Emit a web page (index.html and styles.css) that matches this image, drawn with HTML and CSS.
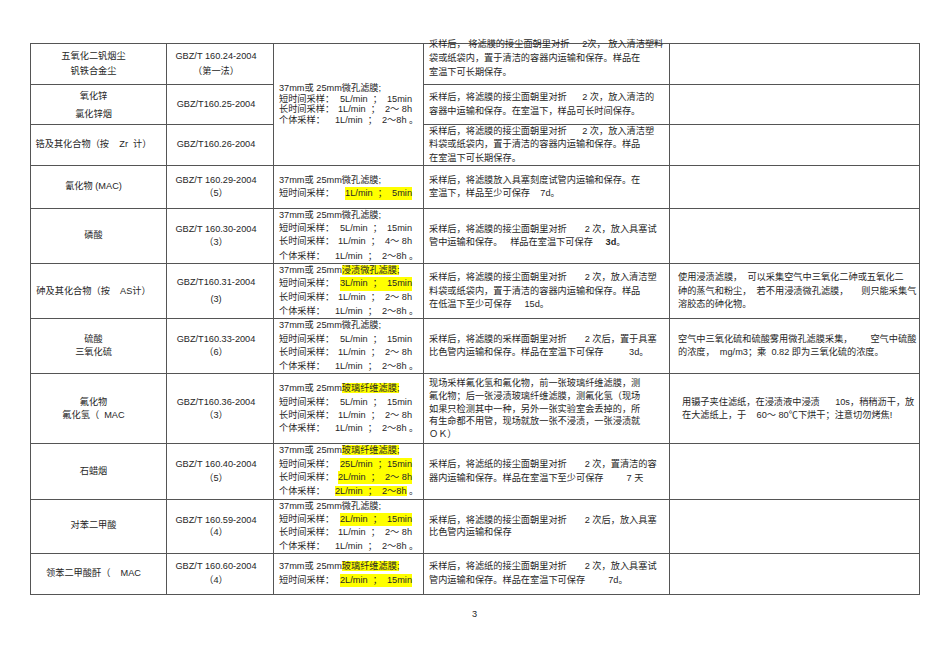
FILE: index.html
```html
<!DOCTYPE html>
<html lang="zh-CN">
<head>
<meta charset="utf-8">
<title>采样方法</title>
<link rel="stylesheet" href="styles.css">
</head>
<body>
<div class="page">
<table class="grid">
<colgroup><col class="c1"><col class="c2"><col class="c3"><col class="c4"><col class="c5"></colgroup>
<tr class="h41">
<td class="name"><div class="ln l15">五氧化二钒烟尘</div><div class="ln l15">钒铁合金尘</div></td>
<td class="std"><div class="ln l15">GBZ/T 160.24-2004</div><div class="ln l15">（第一法）</div></td>
<td class="samp" rowspan="3">
<div class="ln tight">37mm或 25mm微孔滤膜;</div>
<div class="ln tight kv"><span>短时间采样：</span><span>5L/min  ；  15min</span></div>
<div class="ln tight kv"><span>长时间采样：</span><span>1L/min  ；  2～ 8h</span></div>
<div class="ln tight"><span class="k3">个体采样：</span><span>1L/min  ；  2～8h 。</span></div>
</td>
<td class="note top"><div class="shift"><div class="ln l14">采样后， 将滤膜的接尘面朝里对折     2次， 放入清洁塑料</div><div class="ln l14">袋或纸袋内，置于清洁的容器内运输和保存。样品在</div><div class="ln l14">室温下可长期保存。</div></div></td>
<td class="rem"></td>
</tr>
<tr class="h40">
<td class="name"><div class="ln l18">氧化锌</div><div class="ln l18">氯化锌烟</div></td>
<td class="std"><div class="ln">GBZ/T160.25-2004</div></td>
<td class="note"><div class="ln">采样后，将滤膜的接尘面朝里对折      2 次，放入清洁的</div><div class="ln">容器中运输和保存。在室温下，样品可长时间保存。</div></td>
<td class="rem"></td>
</tr>
<tr class="h40">
<td class="name"><div class="ln">锆及其化合物（按    Zr  计）</div></td>
<td class="std"><div class="ln">GBZ/T160.26-2004</div></td>
<td class="note"><div class="ln">采样后，将滤膜的接尘面朝里对折      2 次，放入清洁塑</div><div class="ln">料袋或纸袋内，置于清洁的容器内运输和保存。样品</div><div class="ln">在室温下可长期保存。</div></td>
<td class="rem"></td>
</tr>
<tr class="h43">
<td class="name"><div class="ln">氰化物 (MAC)</div></td>
<td class="std"><div class="ln">GBZ/T 160.29-2004</div><div class="ln">（5）</div></td>
<td class="samp">
<div class="ln">37mm或 25mm微孔滤膜;</div>
<div class="ln kv"><span>短时间采样：</span><span class="hl">1L/min  ；  5min</span></div>
</td>
<td class="note"><div class="ln">采样后，将滤膜放入具塞刻度试管内运输和保存。在</div><div class="ln">室温下，样品至少可保存    7d。</div></td>
<td class="rem"></td>
</tr>
<tr class="h55">
<td class="name"><div class="ln">磷酸</div></td>
<td class="std"><div class="ln">GBZ/T 160.30-2004</div><div class="ln">（3）</div></td>
<td class="samp">
<div class="ln">37mm或 25mm微孔滤膜;</div>
<div class="ln kv"><span>短时间采样：</span><span>5L/min  ；  15min</span></div>
<div class="ln kv"><span>长时间采样：</span><span>1L/min  ；  4～ 8h</span></div>
<div class="ln last"><span class="k3">个体采样：</span><span>1L/min  ；  2～8h 。</span></div>
</td>
<td class="note"><div class="ln">采样后，将滤膜的接尘面朝里对折       2 次，放入具塞试</div><div class="ln">管中运输和保存。   样品在室温下可保存     <b>3d</b>。</div></td>
<td class="rem"></td>
</tr>
<tr class="h55">
<td class="name"><div class="ln">砷及其化合物（按    AS计）</div></td>
<td class="std"><div class="ln l17">GBZ/T160.31-2004</div><div class="ln l17">(3)</div></td>
<td class="samp">
<div class="ln">37mm或 25mm<span class="hl">浸渍微孔滤膜;</span></div>
<div class="ln kv"><span>短时间采样：</span><span class="hl">3L/min  ；  15min</span></div>
<div class="ln kv"><span>长时间采样：</span><span>1L/min  ；  2～ 8h</span></div>
<div class="ln last"><span class="k3">个体采样：</span><span>1L/min  ；  2～8h 。</span></div>
</td>
<td class="note"><div class="ln">采样后，将滤膜的接尘面朝里对折       2 次，放入清洁塑</div><div class="ln">料袋或纸袋内，置于清洁的容器内运输和保存。样品</div><div class="ln">在低温下至少可保存     15d。</div></td>
<td class="rem"><div class="ln">使用浸渍滤膜，  可以采集空气中三氧化二砷或五氧化二</div><div class="ln">砷的蒸气和粉尘，  若不用浸渍微孔滤膜，     则只能采集气</div><div class="ln">溶胶态的砷化物。</div></td>
</tr>
<tr class="h55">
<td class="name"><div class="ln">硫酸</div><div class="ln">三氧化硫</div></td>
<td class="std"><div class="ln">GBZ/T160.33-2004</div><div class="ln">（6）</div></td>
<td class="samp">
<div class="ln">37mm或 25mm微孔滤膜;</div>
<div class="ln kv"><span>短时间采样：</span><span>5L/min  ；  15min</span></div>
<div class="ln kv"><span>长时间采样：</span><span>1L/min  ；  2～ 8h</span></div>
<div class="ln last"><span class="k3">个体采样：</span><span>1L/min  ；  2～8h 。</span></div>
</td>
<td class="note"><div class="ln">采样后，将滤膜的采样面朝里对折       2 次后，置于具塞</div><div class="ln">比色管内运输和保存。样品在室温下可保存          3d。</div></td>
<td class="rem"><div class="ln">空气中三氧化硫和硫酸雾用微孔滤膜采集，       空气中硫酸</div><div class="ln">的浓度，  mg/m3；乘  0.82 即为三氧化硫的浓度。</div></td>
</tr>
<tr class="h70">
<td class="name"><div class="ln">氟化物</div><div class="ln">氟化氢（  MAC</div></td>
<td class="std"><div class="ln">GBZ/T160.36-2004</div><div class="ln">（3）</div></td>
<td class="samp">
<div class="ln">37mm或 25mm<span class="hl">玻璃纤维滤膜;</span></div>
<div class="ln kv"><span>短时间采样：</span><span>5L/min  ；  15min</span></div>
<div class="ln kv"><span>长时间采样：</span><span>1L/min  ；  2～ 8h</span></div>
<div class="ln"><span class="k3">个体采样：</span><span>1L/min  ；  2～8h 。</span></div>
</td>
<td class="note"><div class="ln l127">现场采样氟化氢和氟化物，前一张玻璃纤维滤膜，测</div><div class="ln l127">氟化物；后一张浸渍玻璃纤维滤膜，测氟化氢（现场</div><div class="ln l127">如果只检测其中一种，另外一张实验室会丢掉的，所</div><div class="ln l127">有生命都不用管，现场就放一张不浸渍，一张浸渍就</div><div class="ln l127">ＯＫ）</div></td>
<td class="rem"><div class="ln ind">用镊子夹住滤纸，在浸渍液中浸渍      10s，稍稍沥干，放</div><div class="ln ind">在大滤纸上，于    60～ 80℃下烘干；注意切勿烤焦!</div></td>
</tr>
<tr class="h55">
<td class="name"><div class="ln">石蜡烟</div></td>
<td class="std"><div class="ln">GBZ/T 160.40-2004</div><div class="ln">（5）</div></td>
<td class="samp">
<div class="ln">37mm或 25mm<span class="hl">玻璃纤维滤膜;</span></div>
<div class="ln kv"><span>短时间采样：</span><span class="hl">25L/min  ；15min</span></div>
<div class="ln kv"><span>长时间采样：</span><span class="hl">2L/min  ；  2～ 8h</span></div>
<div class="ln last"><span class="k3">个体采样：</span><span class="hl">2L/min  ；  2～8h</span> 。</div>
</td>
<td class="note"><div class="ln">采样后，将滤纸的接尘面朝里对折       2 次，置清洁的容</div><div class="ln">器内运输和保存。样品在室温下至少可保存         7 天</div></td>
<td class="rem"></td>
</tr>
<tr class="h53">
<td class="name"><div class="ln">对苯二甲酸</div></td>
<td class="std"><div class="ln l12">GBZ/T 160.59-2004</div><div class="ln l12">（4）</div></td>
<td class="samp">
<div class="ln l125">37mm或 25mm微孔滤膜;</div>
<div class="ln l125 kv"><span>短时间采样：</span><span class="hl">2L/min  ；  15min</span></div>
<div class="ln l125 kv"><span>长时间采样：</span><span>1L/min  ；  2～ 8h</span></div>
<div class="ln l125 last"><span class="k3">个体采样：</span><span>1L/min  ；  2～8h 。</span></div>
</td>
<td class="note"><div class="ln l12">采样后，将滤膜的接尘面朝里对折       2 次后，放入具塞</div><div class="ln l12">比色管内运输和保存</div></td>
<td class="rem"></td>
</tr>
<tr class="h41">
<td class="name"><div class="ln">领苯二甲酸酐（    MAC</div></td>
<td class="std"><div class="ln">GBZ/T 160.60-2004</div><div class="ln">（4）</div></td>
<td class="samp">
<div class="ln">37mm或 25mm<span class="hl">玻璃纤维滤膜;</span></div>
<div class="ln kv"><span>短时间采样：</span><span class="hl">2L/min  ；  15min</span></div>
</td>
<td class="note"><div class="ln">采样后，将滤纸的接尘面朝里对折       2 次，放入具塞试</div><div class="ln">管内运输和保存。样品在室温下可保存         7d。</div></td>
<td class="rem"></td>
</tr>
</table>
<div class="pageno">3</div>
</div>
</body>
</html>
```
FILE: styles.css
```css
html, body {
  margin: 0;
  background: #ffffff;
}
body {
  font-family: "Liberation Sans", "Noto Sans CJK SC", sans-serif;
  font-size: 9.2px;
  color: #262626;
}
.page {
  padding: 43px 0 0 30px;
  width: 889px;
}
.grid {
  border-collapse: collapse;
  table-layout: fixed;
  width: 889px;
}
.c1 { width: 136px; }
.c2 { width: 107px; }
.c3 { width: 150px; }
.c4 { width: 246px; }
.c5 { width: 250px; }

.grid td {
  border: 1px solid #555555;
  padding: 0;
  vertical-align: middle;
}
.h40 { height: 40px; }
.h41 { height: 41px; }
.h43 { height: 43px; }
.h53 { height: 53px; }
.h55 { height: 55px; }
.h70 { height: 70px; }

.ln {
  white-space: pre;
  line-height: 13.3px;
}
.l12 { line-height: 12.3px; }
.l125 { line-height: 13px; }
.l127 { line-height: 12.7px; }
.l14 { line-height: 14px; }
.l15 { line-height: 15px; }
.l17 { line-height: 17px; }
.l18 { line-height: 18px; }
.tight { line-height: 10.6px; }

.name {
  text-align: center;
  padding-right: 10px !important;
}
.std {
  text-align: center;
  padding-right: 8px !important;
}
.samp {
  padding: 0 11px 0 5px !important;
}
.kv {
  display: flex;
  justify-content: space-between;
}
.k3 {
  display: inline-block;
  width: 56px;
}
.last {
  margin-top: 1px;
}
.note {
  padding-left: 5px !important;
}
.note.top {
  vertical-align: top !important;
}
.shift {
  margin-top: -7px;
}
.rem {
  padding-left: 8px !important;
}
.ind {
  padding-left: 4px;
}
.hl {
  background: #ffff00;
}
.pageno {
  margin-top: 13px;
  text-align: center;
  line-height: 12px;
}
```
